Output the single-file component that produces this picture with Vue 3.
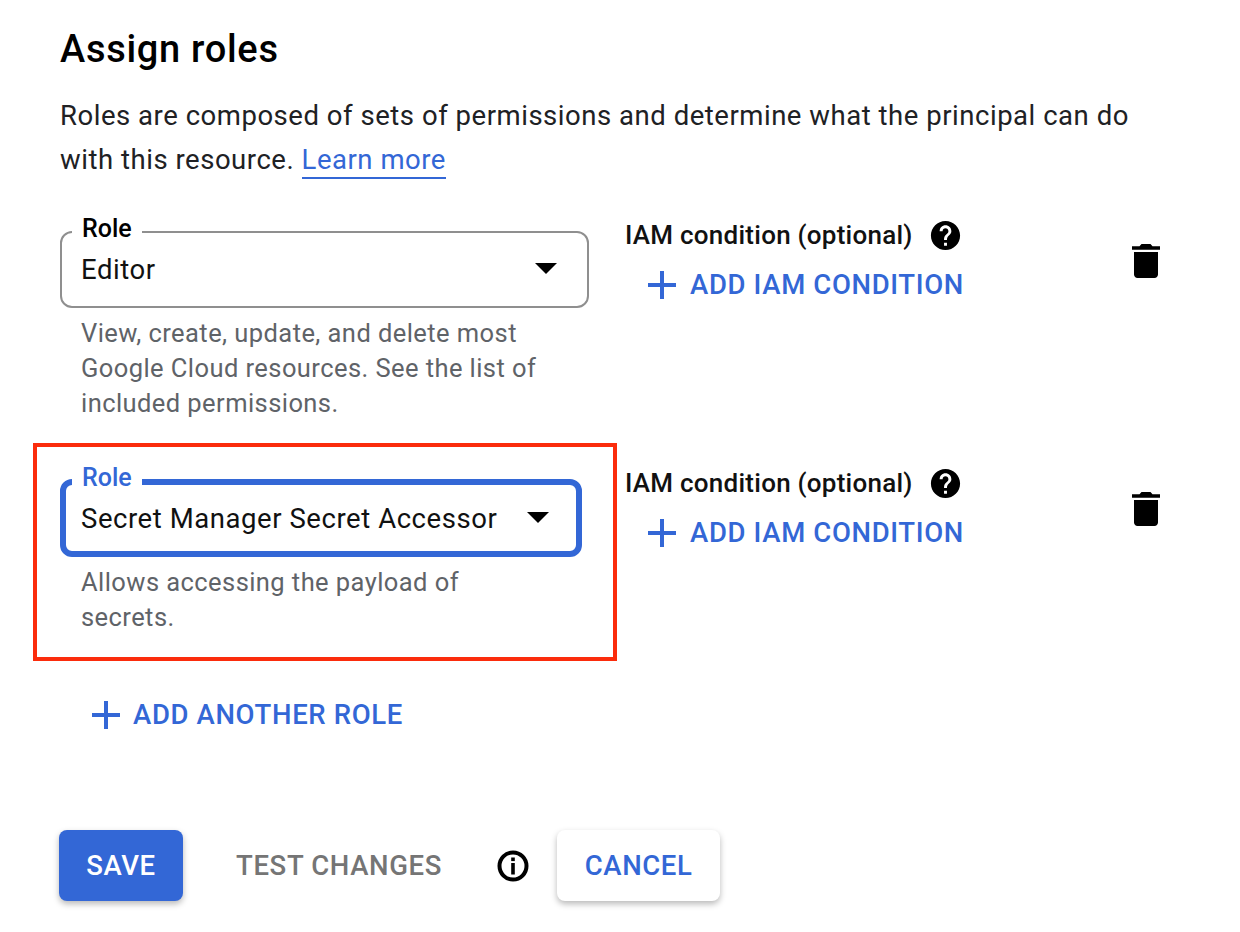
<template>
  <div class="page">
    <h1 class="title">Assign roles</h1>
    <p class="intro">
      Roles are composed of sets of permissions and determine what the principal can do
      with this resource. <a class="learn" href="#">Learn more</a>
    </p>

    <div class="role-list">
      <div
        v-for="role in roles"
        :key="role.name"
        class="role-row"
        :class="{ 'is-focused': role.focused }"
      >
        <div class="role-col">
          <div class="field">
            <span class="field-label">Role</span>
            <span class="field-value">{{ role.name }}</span>
            <span class="arrow"></span>
          </div>
          <p class="help">{{ role.help }}</p>
          <div v-if="role.focused" class="highlight"></div>
        </div>

        <div class="iam-col">
          <div class="iam-label">
            <span>IAM condition (optional)</span>
            <svg class="help-icon" viewBox="0 0 24 24">
              <path d="M12 2C6.48 2 2 6.48 2 12s4.48 10 10 10 10-4.48 10-10S17.52 2 12 2zm1 17h-2v-2h2v2zm2.07-7.75l-.9.92C13.45 12.9 13 13.5 13 15h-2v-.5c0-1.1.45-2.1 1.17-2.83l1.24-1.26c.37-.36.59-.86.59-1.41 0-1.1-.9-2-2-2s-2 .9-2 2H8c0-2.21 1.79-4 4-4s4 1.79 4 4c0 .88-.36 1.68-.93 2.25z" />
            </svg>
          </div>
          <button class="text-btn iam-add">
            <svg class="plus" viewBox="0 0 28 28"><path d="M12 0h4v12h12v4H16v12h-4V16H0v-4h12z" /></svg>
            ADD IAM CONDITION
          </button>
        </div>

        <svg class="trash" viewBox="0 0 28 34">
          <path d="M9.5 0h9l2 2.2H28v3.6H0V2.2h7.5zM2 8h24v22.5c0 1.9-1.6 3.5-3.500 3.500h-17C3.600 34 2 32.400 2 30.500z" />
        </svg>
      </div>
    </div>

    <button class="text-btn add-role">
      <svg class="plus" viewBox="0 0 28 28"><path d="M12 0h4v12h12v4H16v12h-4V16H0v-4h12z" /></svg>
      ADD ANOTHER ROLE
    </button>

    <div class="actions">
      <button class="btn save">SAVE</button>
      <span class="test">TEST CHANGES</span>
      <svg class="info" viewBox="0 0 32 32">
        <circle cx="16" cy="16" r="13.500" fill="none" stroke="#000" stroke-width="4" />
        <rect x="14.200" y="7.500" width="3.600" height="3.600" />
        <rect x="14.200" y="13" width="3.600" height="11.500" />
      </svg>
      <button class="btn cancel">CANCEL</button>
    </div>
  </div>
</template>

<script setup>
const roles = [
  {
    name: 'Editor',
    help: 'View, create, update, and delete most Google Cloud resources. See the list of included permissions.',
    focused: false
  },
  {
    name: 'Secret Manager Secret Accessor',
    help: 'Allows accessing the payload of secrets.',
    focused: true
  }
]
</script>

<style>
html, body {
  margin: 0;
  background: #fff;
}
</style>

<style scoped>
.page {
  width: 1240px;
  height: 932px;
  box-sizing: border-box;
  padding: 26px 0 0 60px;
  font-family: Roboto, "Liberation Sans", sans-serif;
  color: #000;
  overflow: hidden;
}

.title {
  margin: 0;
  font-size: 38px;
  line-height: 46px;
  font-weight: 500;
  letter-spacing: 0.7px;
}

.intro {
  margin: 22px 0 0;
  width: 1085px;
  font-size: 27.500px;
  line-height: 44px;
  letter-spacing: 0.53px;
  color: #202124;
}

.learn {
  color: #3367d6;
  text-decoration: none;
  border-bottom: 2px solid #3367d6;
  padding-bottom: 1px;
}

.role-list {
  margin-top: 49px;
}

.role-row {
  display: flex;
  width: 1100px;
  height: 248px;
}

.role-row.is-focused {
  height: 219px;
}

.role-col {
  position: relative;
  width: 529px;
  flex-shrink: 0;
}

.field {
  position: relative;
  display: flex;
  align-items: center;
  box-sizing: border-box;
  height: 77px;
  padding: 0 30px 0 19px;
  border: 2px solid #8f8f8f;
  border-radius: 12px;
}

.field-label {
  position: absolute;
  left: 10px;
  top: -18px;
  padding: 0 10px;
  background: #fff;
  font-size: 25px;
  line-height: 28px;
  font-weight: 500;
}

.field-value {
  flex: 1;
  font-size: 27.500px;
  line-height: 32px;
  letter-spacing: 0.56px;
  color: #111;
}

.arrow {
  width: 0;
  height: 0;
  border-left: 11px solid transparent;
  border-right: 11px solid transparent;
  border-top: 11px solid #000;
  margin-top: -2px;
}

.is-focused .field {
  width: 522px;
  height: 78px;
  padding: 0 27px 0 15px;
  border: 6px solid #3367d6;
}

.is-focused .field-value {
  margin-top: 1px;
}

.is-focused .field-label {
  left: 6px;
  top: -21px;
  color: #3367d6;
}

.help {
  margin: 8px 0 0;
  padding-left: 21px;
  width: 460px;
  font-size: 25.500px;
  line-height: 35px;
  letter-spacing: 0.43px;
  color: #5f6368;
}

.highlight {
  position: absolute;
  left: -27px;
  top: -36px;
  width: 584px;
  height: 218px;
  box-sizing: border-box;
  border: 4px solid #fb2c0c;
  pointer-events: none;
}

.iam-col {
  margin-left: 36px;
  flex: 1;
}

.iam-label {
  display: flex;
  align-items: center;
  height: 32px;
  margin-top: -12px;
  font-size: 26px;
  letter-spacing: 0.25px;
  font-weight: 500;
  color: #111;
}

.help-icon {
  width: 35px;
  height: 35px;
  margin-left: 15px;
}

.text-btn {
  display: flex;
  align-items: center;
  padding: 0;
  border: none;
  background: none;
  color: #3367d6;
  font-family: inherit;
  font-size: 27.500px;
  font-weight: 500;
  line-height: 34px;
  letter-spacing: 0.65px;
}

.plus {
  width: 28px;
  height: 28px;
  margin-right: 14px;
  fill: #3367d6;
}

.iam-add {
  margin: 17px 0 0 23px;
}

.trash {
  width: 28px;
  height: 34px;
  margin-top: 13px;
  flex-shrink: 0;
}

.add-role {
  margin: 0 0 0 32px;
}

.add-role .plus {
  margin-right: 13px;
}

.actions {
  display: flex;
  align-items: center;
  margin-top: 98px;
}

.btn {
  height: 71px;
  border: none;
  border-radius: 8px;
  font-family: inherit;
  font-size: 27.500px;
  font-weight: 500;
  letter-spacing: 0.6px;
  box-shadow: 0 3px 6px rgba(0, 0, 0, 0.28);
}

.save {
  width: 124px;
  margin-left: -1px;
  background: #3367d6;
  color: #fff;
}

.test {
  margin-left: 53px;
  font-size: 27.500px;
  font-weight: 500;
  letter-spacing: 0.65px;
  color: #757575;
}

.info {
  width: 32px;
  height: 32px;
  margin-left: 55px;
}

.cancel {
  width: 163px;
  margin-left: 28px;
  background: #fff;
  color: #3367d6;
}
</style>
